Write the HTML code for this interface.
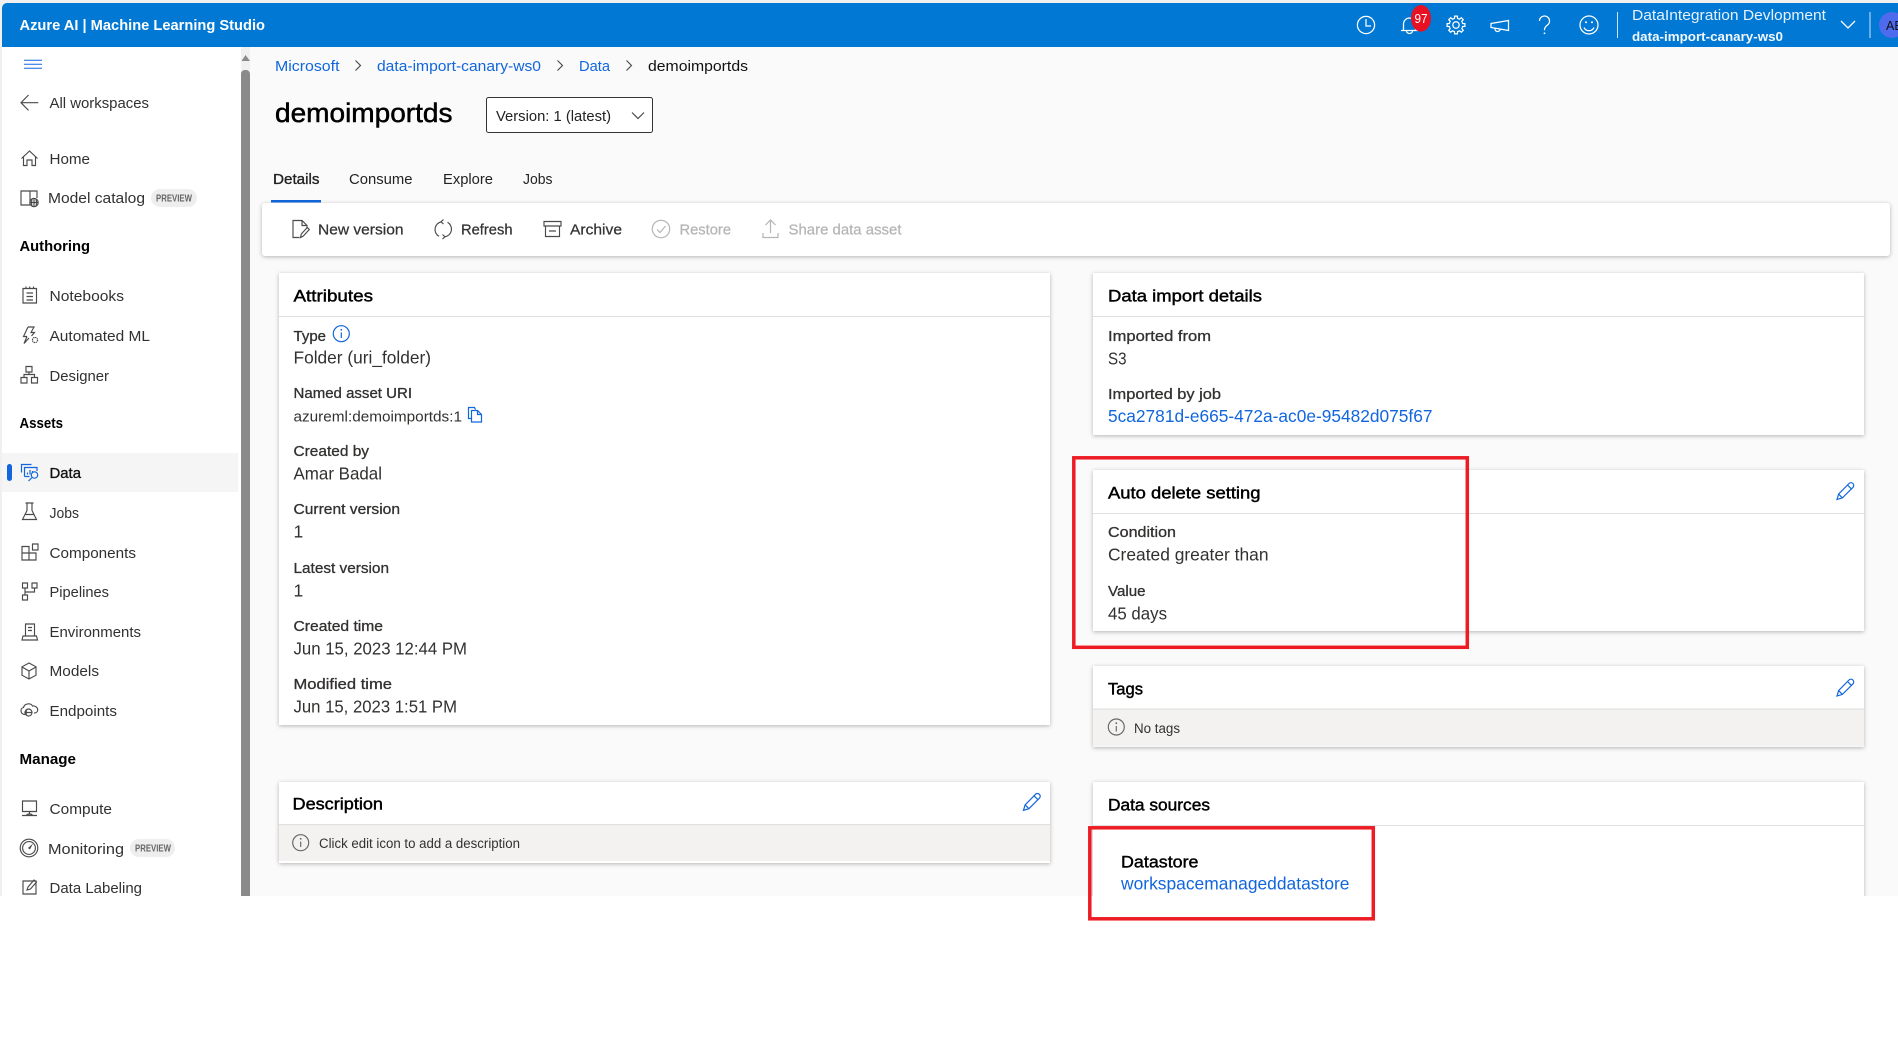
<!DOCTYPE html>
<html lang="en"><head><meta charset="utf-8"><title>Azure AI | Machine Learning Studio</title>
<style>
html,body{margin:0;padding:0;background:#fff;width:1898px;height:1052px;overflow:hidden}
svg{display:block}
text{font-family:"Liberation Sans",sans-serif;fill:#323130;font-size:14.5px}
.nav{fill:#323130;font-size:14.8px}
.sec{fill:#000;font-size:14.5px;font-weight:700}
.h{fill:#000;font-size:17px;stroke:#000;stroke-width:.45}
.l{fill:#323130;font-size:14.8px;stroke:#323130;stroke-width:.3}
.v{fill:#323130;font-size:17.5px}
.a{fill:#1166dd}
.t{fill:#333;font-size:14.8px;stroke:#333;stroke-width:.25}
.d{fill:#b5b5b5;font-size:14.8px;stroke:#b5b5b5;stroke-width:.25}
.i{fill:none;stroke:#4a4a4a;stroke-width:1.15}
.w{fill:none;stroke:#fff;stroke-width:1.25}
.b{fill:none;stroke:#1166dd;stroke-width:1.2}
.g{fill:none;stroke:#b5b5b5;stroke-width:1.2}
.card{fill:#fff;filter:drop-shadow(0 1.5px 2px rgba(0,0,0,.28))}
.ln{fill:#e0e0e0}
.red{fill:none;stroke:#ed1c24;stroke-width:3.5}
</style></head><body>
<svg width="1898" height="1052" viewBox="0 0 1898 1052" xmlns="http://www.w3.org/2000/svg">
<defs>
<path id="pen" d="M0 0l1.6-5.4L12-16a2.7 2.7 0 0 1 3.9 3.9L5.4-1.6ZM1.6-5.4l3.8 3.8M10.5-14.5l3.9 3.9"/>
<path id="tooth" d="M-2.6-6.28L-1.53-6.63-1.41-8.89 1.41-8.89 1.53-6.63 2.6-6.28"/>
</defs>
<rect width="1898" height="896" fill="#f0f0f0"/>
<rect x="250" y="47" width="1648" height="849" fill="#fafafa"/>
<rect x="2" y="47" width="239" height="849" fill="#fff"/>

<!-- Top bar -->
<path d="M2 47V8a5 5 0 0 1 5-5H1898V47Z" fill="#0078d4"/>
<text x="19.5" y="30" textLength="245.5" lengthAdjust="spacingAndGlyphs" style="fill:#fff;font-weight:700;font-size:14.5px">Azure AI | Machine Learning Studio</text>
<circle class="w" cx="1366" cy="25" r="8.6"/><path class="w" d="M1366 19v7h5"/>
<path class="w" d="M1403.5 30v-6a6 6 0 0 1 12 0v6M1401 30.5h17M1406.500 31a3 2.5 0 0 0 6 0"/>
<ellipse cx="1421" cy="18.3" rx="10" ry="13.3" fill="#e81123"/>
<text x="1414.5" y="22.8" textLength="13" lengthAdjust="spacingAndGlyphs" style="fill:#fff;font-size:13px">97</text>
<g class="w" transform="translate(1456 25)"><circle r="3.2"/>
<use href="#tooth"/><use href="#tooth" transform="rotate(45)"/><use href="#tooth" transform="rotate(90)"/><use href="#tooth" transform="rotate(135)"/><use href="#tooth" transform="rotate(180)"/><use href="#tooth" transform="rotate(225)"/><use href="#tooth" transform="rotate(270)"/><use href="#tooth" transform="rotate(315)"/></g>
<path class="w" d="M1491 23.5L1508.5 20.5V30.5L1491 27.5ZM1495 28.5a2.6 2.6 0 0 0 5.2.8"/>
<path class="w" d="M1539.5 21a5 5 0 1 1 8 4c-2 1.5-3 2.5-3 4.5v.8"/><circle cx="1544.5" cy="33.3" r=".9" fill="#fff"/>
<circle class="w" cx="1589" cy="25" r="9"/><circle cx="1586" cy="22.3" r="1" fill="#fff"/><circle cx="1592" cy="22.3" r="1" fill="#fff"/><path class="w" d="M1584 27.5a5.5 5.5 0 0 0 10 0"/>
<rect x="1617" y="12" width="1" height="26" fill="#cfe4f5"/>
<text x="1632" y="20" textLength="194" lengthAdjust="spacingAndGlyphs" style="fill:#e6f1fb;font-size:14.8px">DataIntegration Devlopment</text>
<text x="1632" y="41" textLength="151" lengthAdjust="spacingAndGlyphs" style="fill:#f2f8fd;font-size:12.8px;font-weight:700">data-import-canary-ws0</text>
<path class="w" d="M1841 21l7 7 7-7"/>
<rect x="1869.5" y="12" width="1" height="26" fill="#cfe4f5"/>
<circle cx="1892" cy="25" r="13" fill="#4f6bed"/>
<text x="1886" y="30" style="fill:#111;font-size:12.5px">AB</text>

<!-- Sidebar -->
<path d="M24 60.3h18M24 64.3h18M24 68.3h18" stroke="#1166dd" stroke-width="1"/>
<path d="M241.5 61l4-6 4.5 6Z" fill="#8a8a8a"/>
<rect x="241" y="70" width="9" height="830" rx="4" fill="#8a8a8a"/>
<rect x="2" y="453" width="236" height="39" fill="#f5f5f5"/>
<rect x="7" y="464" width="5" height="17" rx="2.5" fill="#1166dd"/>

<path class="i" d="M38.3 102.7H21.5M28.5 95l-7.5 7.7 7.5 7.7"/>
<text class="nav" x="49.5" y="108" textLength="99.5" lengthAdjust="spacingAndGlyphs">All workspaces</text>
<path class="i" d="M21.5 158.5L29.5 151l8 7.5M23.5 157v8.500H27V160h5v5.5h3.5V157"/>
<text class="nav" x="49.5" y="164" textLength="40.5" lengthAdjust="spacingAndGlyphs">Home</text>
<path class="i" d="M30 205H21V191h9v14M30 191h7v7"/><circle class="i" cx="34" cy="202.5" r="4.2" stroke-width="1.6"/><path class="i" d="M34 198.500v8M30 202.500h8M32.200 199c-1 2.500-1 5 0 7M35.800 199c1 2.500 1 5 0 7"/>
<text class="nav" x="48" y="203" textLength="97" lengthAdjust="spacingAndGlyphs">Model catalog</text>
<rect x="151" y="189" width="46" height="18" rx="9" fill="#eee"/>
<text x="156" y="201.5" textLength="36" lengthAdjust="spacingAndGlyphs" style="fill:#666;font-size:10px;font-weight:700">PREVIEW</text>
<text class="sec" x="19.5" y="251" textLength="70.5" lengthAdjust="spacingAndGlyphs">Authoring</text>
<path class="i" d="M23 288.5h13.500v14.500H23ZM26.5 293h6.500M26.5 296.500h6.500M26.5 300h6.500M26 286.5v2M29.700 286.5v2M33.500 286.5v2"/>
<text class="nav" x="49.5" y="301" textLength="74.5" lengthAdjust="spacingAndGlyphs">Notebooks</text>
<path class="i" d="M28 327h6l-3 5.500h3.500l-3 3.500M27 336.5h-3.500l4.500-9.500M27 336.5l-3 7 5-5.500"/><circle class="i" cx="35" cy="340" r="2.6" stroke-dasharray="1.400 .6" stroke-width="1.7"/>
<text class="nav" x="49.5" y="341" textLength="100.5" lengthAdjust="spacingAndGlyphs">Automated ML</text>
<path class="i" d="M26 366.5h6v5.500h-6ZM21 377.5h6v5.500h-6ZM31.5 377.5h6v5.500h-6ZM29 372v2.500M24 377.5v-3h10.500v3"/>
<text class="nav" x="49.5" y="381" textLength="59.5" lengthAdjust="spacingAndGlyphs">Designer</text>
<text class="sec" x="19.5" y="428" textLength="43.5" lengthAdjust="spacingAndGlyphs">Assets</text>

<path class="b" d="M21.5 472.5V464.500h10M24.5 476.5V467.500H37V471M24.5 476.5h5M27.5 474.5v-2M30 474.5v-4.500M32.5 473v-2"/><circle class="b" cx="34.5" cy="475" r="3.2"/><path class="b" d="M32 477.5l-3.500 3.500"/>
<text x="49.5" y="478" textLength="31.5" lengthAdjust="spacingAndGlyphs" style="fill:#111;font-size:14.8px;stroke:#111;stroke-width:.35">Data</text>
<path class="i" d="M25.5 503h8M27 503v7.500L22.5 519.500h14L32 510.500V503M25 514.500h9"/>
<text class="nav" x="49.5" y="518" textLength="29.5" lengthAdjust="spacingAndGlyphs">Jobs</text>
<path class="i" d="M22 546.5h7V560h-7ZM22 553h14v7h-7M32.5 544h5.500v6h-5.500Z"/>
<text class="nav" x="49.5" y="558" textLength="86.5" lengthAdjust="spacingAndGlyphs">Components</text>
<path class="i" d="M22.5 583h5v5h-5ZM32 583h5v5h-5ZM22.5 595h5v5h-5ZM25 588v7M25 592h9.500v-4"/>
<text class="nav" x="49.5" y="597" textLength="59.5" lengthAdjust="spacingAndGlyphs">Pipelines</text>
<path class="i" d="M25.5 636V624h9v12M28 627.5h4M28 630.5h4M23 636h13.500l1 4H22Z"/>
<text class="nav" x="49.5" y="637" textLength="91.5" lengthAdjust="spacingAndGlyphs">Environments</text>
<path class="i" d="M29 663l7 3.800v8.400l-7 3.800-7-3.800v-8.400ZM22 667l7 4 7-4M29 671v8"/>
<text class="nav" x="49.5" y="676" textLength="49.5" lengthAdjust="spacingAndGlyphs">Models</text>
<path class="i" d="M25 714.5c-4.500 0-5.500-6-1.500-7 1-4 7-5 9-1.500 3-.5 6 2 5 5-.5 1.500-2 2-3.500 2M32 712.500h-7M27 710.500l-2 2 2 2"/><circle class="i" cx="28.5" cy="712.5" r="3.5"/>
<text class="nav" x="49.5" y="716" textLength="67.5" lengthAdjust="spacingAndGlyphs">Endpoints</text>
<text class="sec" x="19.5" y="764" textLength="56.5" lengthAdjust="spacingAndGlyphs">Manage</text>
<path class="i" d="M22.5 801h14v10.500h-14ZM29.5 811.5v2.500M22 815.5h15M26.5 815.5c.5-2 5.500-2 6 0"/>
<text class="nav" x="49.5" y="814" textLength="62.5" lengthAdjust="spacingAndGlyphs">Compute</text>
<circle class="i" cx="29" cy="848" r="8.8"/><circle class="i" cx="29" cy="848" r="6.4"/><path d="M28 848l5-4.500-3 6Z" fill="#4a4a4a"/>
<text class="nav" x="48" y="854" textLength="76" lengthAdjust="spacingAndGlyphs">Monitoring</text>
<rect x="130" y="839" width="45" height="18" rx="9" fill="#eee"/>
<text x="135" y="851.5" textLength="36" lengthAdjust="spacingAndGlyphs" style="fill:#666;font-size:10px;font-weight:700">PREVIEW</text>
<path class="i" d="M23 881h13v13H23ZM27 890l1-3 6-7 2.500 2-6 7Z"/>
<text class="nav" x="49.5" y="893" textLength="92.5" lengthAdjust="spacingAndGlyphs">Data Labeling</text>

<!-- Breadcrumb -->
<text class="a" x="275" y="71" textLength="64.5" lengthAdjust="spacingAndGlyphs" style="font-size:14.8px">Microsoft</text>
<path class="i" d="M355.5 60.5l5 5-5 5M557.5 60.5l5 5-5 5M626.5 60.5l5 5-5 5" stroke-width="1"/>
<text class="a" x="377" y="71" textLength="164" lengthAdjust="spacingAndGlyphs" style="font-size:14.8px">data-import-canary-ws0</text>
<text class="a" x="579" y="71" textLength="31" lengthAdjust="spacingAndGlyphs" style="font-size:14.8px">Data</text>
<text x="648" y="71" textLength="100" lengthAdjust="spacingAndGlyphs" style="fill:#111;font-size:14.8px">demoimportds</text>
<text x="275" y="122" textLength="177.5" lengthAdjust="spacingAndGlyphs" style="fill:#000;font-size:26.5px;stroke:#000;stroke-width:.5">demoimportds</text>
<rect x="486.5" y="97.5" width="166" height="35" rx="2" fill="#fff" stroke="#333"/>
<text x="496" y="121" textLength="115" lengthAdjust="spacingAndGlyphs" style="fill:#222;font-size:14.8px">Version: 1 (latest)</text>
<path class="i" d="M632 112.5l6 6 6-6"/>

<!-- Tabs -->
<text x="273" y="184" textLength="46.5" lengthAdjust="spacingAndGlyphs" style="fill:#222;stroke:#222;stroke-width:.35;font-size:14.8px">Details</text>
<text x="349" y="184" textLength="63.5" lengthAdjust="spacingAndGlyphs" style="fill:#222;font-size:14.8px">Consume</text>
<text x="443" y="184" textLength="50" lengthAdjust="spacingAndGlyphs" style="fill:#222;font-size:14.8px">Explore</text>
<text x="523" y="184" textLength="29.5" lengthAdjust="spacingAndGlyphs" style="fill:#222;font-size:14.8px">Jobs</text>
<rect x="271" y="200" width="50" height="2.5" fill="#1166dd"/>

<!-- Toolbar -->
<rect class="card" x="262" y="203" width="1628" height="53" rx="3"/>
<path class="i" d="M299.500 237.500H293V220.500h9l5 5v3M302 220.500v5h5M300.500 237.500l.8-3.500 6-6.500 2 2-6 6.500Z"/>
<text class="t" x="318" y="234.5" textLength="85.5" lengthAdjust="spacingAndGlyphs">New version</text>
<path class="i" d="M441.500 221.800a7.800 7.800 0 0 0-2.500 14.500M445 236.800a7.800 7.800 0 0 0 2.500-14.500M443.500 219.500l-2.500 2.300 2.500 2.300M442.500 234.500l2.500 2.300-2.500 2.300"/>
<text class="t" x="461" y="234.5" textLength="51.5" lengthAdjust="spacingAndGlyphs">Refresh</text>
<path class="i" d="M544 221.500h17v4.500h-17ZM545.500 226v10.500h14V226M549 231h7" stroke-width="1.3"/>
<text class="t" x="570" y="234.5" textLength="52" lengthAdjust="spacingAndGlyphs">Archive</text>
<circle class="g" cx="661" cy="229" r="8.7"/><path class="g" d="M657 229.500l3 3 5.500-6.500"/>
<text class="d" x="679.5" y="234.5" textLength="51.5" lengthAdjust="spacingAndGlyphs">Restore</text>
<path class="g" d="M770.500 233v-13M765.500 225l5-5 5 5M763 233v4.500h15V233"/>
<text class="d" x="788.5" y="234.5" textLength="113" lengthAdjust="spacingAndGlyphs">Share data asset</text>

<!-- Attributes -->
<rect class="card" x="279" y="273" width="771" height="452"/>
<rect class="ln" x="279" y="316" width="771" height="1"/>
<text class="h" x="293.5" y="301.5" textLength="79.5" lengthAdjust="spacingAndGlyphs">Attributes</text>
<text class="l" x="293.5" y="341" textLength="32.5" lengthAdjust="spacingAndGlyphs">Type</text>
<circle class="b" cx="341.3" cy="333.7" r="8"/><path class="b" d="M341.3 332.500v5.500"/><circle cx="341.3" cy="329.8" r=".9" fill="#1166dd"/>
<text class="v" x="293.5" y="363.500" textLength="137.5" lengthAdjust="spacingAndGlyphs">Folder (uri_folder)</text>
<text class="l" x="293.5" y="398" textLength="118.5" lengthAdjust="spacingAndGlyphs">Named asset URI</text>
<text x="293.5" y="421.5" textLength="168.5" lengthAdjust="spacingAndGlyphs" style="font-size:14.8px">azureml:demoimportds:1</text>
<path class="b" d="M471.5 418.500h-3V407.500h6l1 2M471.5 410.500h6l4 4v7.500h-10ZM477.5 410.500v4h4" stroke-width="1.3"/>
<text class="l" x="293.5" y="456" textLength="75.5" lengthAdjust="spacingAndGlyphs">Created by</text>
<text class="v" x="293.5" y="479.5" textLength="88.5" lengthAdjust="spacingAndGlyphs">Amar Badal</text>
<text class="l" x="293.5" y="514" textLength="106.5" lengthAdjust="spacingAndGlyphs">Current version</text>
<text class="v" x="293.5" y="537.5">1</text>
<text class="l" x="293.5" y="573" textLength="95.5" lengthAdjust="spacingAndGlyphs">Latest version</text>
<text class="v" x="293.5" y="596.5">1</text>
<text class="l" x="293.5" y="631" textLength="89.5" lengthAdjust="spacingAndGlyphs">Created time</text>
<text class="v" x="293.5" y="654.5" textLength="173.5" lengthAdjust="spacingAndGlyphs">Jun 15, 2023 12:44 PM</text>
<text class="l" x="293.5" y="689" textLength="98.5" lengthAdjust="spacingAndGlyphs">Modified time</text>
<text class="v" x="293.5" y="712.5" textLength="163.5" lengthAdjust="spacingAndGlyphs">Jun 15, 2023 1:51 PM</text>

<!-- Description -->
<rect class="card" x="279" y="782" width="771" height="81"/>
<rect x="279" y="825" width="771" height="36" fill="#f3f2f1"/>
<rect class="ln" x="279" y="824" width="771" height="1.2"/>
<text class="h" x="292.5" y="809.5" textLength="90.5" lengthAdjust="spacingAndGlyphs">Description</text>
<use href="#pen" class="b" x="1023.5" y="810.3"/>
<circle class="i" cx="300.7" cy="842.7" r="8" style="stroke:#666"/><path class="i" d="M300.7 841.500v5.500" style="stroke:#666"/><circle cx="300.7" cy="838.8" r=".9" fill="#666"/>
<text x="319" y="848" textLength="201" lengthAdjust="spacingAndGlyphs" style="font-size:13.5px">Click edit icon to add a description</text>

<!-- Data import details -->
<rect class="card" x="1093" y="273" width="771" height="162"/>
<rect class="ln" x="1093" y="316" width="771" height="1"/>
<text class="h" x="1108" y="301.5" textLength="154" lengthAdjust="spacingAndGlyphs">Data import details</text>
<text class="l" x="1108" y="341" textLength="103" lengthAdjust="spacingAndGlyphs">Imported from</text>
<text class="v" x="1108" y="364.5" textLength="18.5" lengthAdjust="spacingAndGlyphs">S3</text>
<text class="l" x="1108" y="399" textLength="113" lengthAdjust="spacingAndGlyphs">Imported by job</text>
<text class="v a" x="1108" y="422" textLength="324.5" lengthAdjust="spacingAndGlyphs">5ca2781d-e665-472a-ac0e-95482d075f67</text>

<!-- Auto delete -->
<rect class="card" x="1093" y="470" width="771" height="161"/>
<rect class="ln" x="1093" y="513" width="771" height="1"/>
<text class="h" x="1108" y="498.5" textLength="152.5" lengthAdjust="spacingAndGlyphs">Auto delete setting</text>
<use href="#pen" class="b" x="1837" y="499.5"/>
<text class="l" x="1108" y="537" textLength="68" lengthAdjust="spacingAndGlyphs">Condition</text>
<text class="v" x="1108" y="560.5" textLength="160.5" lengthAdjust="spacingAndGlyphs">Created greater than</text>
<text class="l" x="1108" y="596" textLength="37.5" lengthAdjust="spacingAndGlyphs">Value</text>
<text class="v" x="1108" y="619.5" textLength="59" lengthAdjust="spacingAndGlyphs">45 days</text>

<!-- Tags -->
<rect class="card" x="1093" y="666" width="771" height="81"/>
<rect x="1093" y="709" width="771" height="37.5" fill="#f3f2f1"/>
<rect class="ln" x="1093" y="708.5" width="771" height="1.2"/>
<text class="h" x="1108" y="694.5" textLength="35" lengthAdjust="spacingAndGlyphs">Tags</text>
<use href="#pen" class="b" x="1837" y="696"/>
<circle class="i" cx="1116.3" cy="727" r="8" style="stroke:#666"/><path class="i" d="M1116.3 726v5.500" style="stroke:#666"/><circle cx="1116.3" cy="723.2" r=".9" fill="#666"/>
<text x="1134" y="733" textLength="46" lengthAdjust="spacingAndGlyphs" style="font-size:13.5px">No tags</text>

<!-- Data sources -->
<rect class="card" x="1093" y="782" width="771" height="130"/>
<rect class="ln" x="1093" y="825" width="771" height="1"/>
<text class="h" x="1108" y="810.5" textLength="102" lengthAdjust="spacingAndGlyphs">Data sources</text>
<text class="l" x="1121" y="867.5" textLength="77.5" lengthAdjust="spacingAndGlyphs" style="fill:#000;stroke:#000;stroke-width:.4;font-size:16.5px">Datastore</text>
<text class="v a" x="1121" y="889.5" textLength="228.5" lengthAdjust="spacingAndGlyphs">workspacemanageddatastore</text>

<!-- White area below captured viewport -->
<rect x="0" y="896" width="1898" height="156" fill="#fff"/>

<!-- Annotations -->
<rect class="red" x="1073.8" y="457.8" width="393.5" height="189.5"/>
<rect class="red" x="1089.8" y="827.8" width="283.5" height="91"/>
</svg>
</body></html>
